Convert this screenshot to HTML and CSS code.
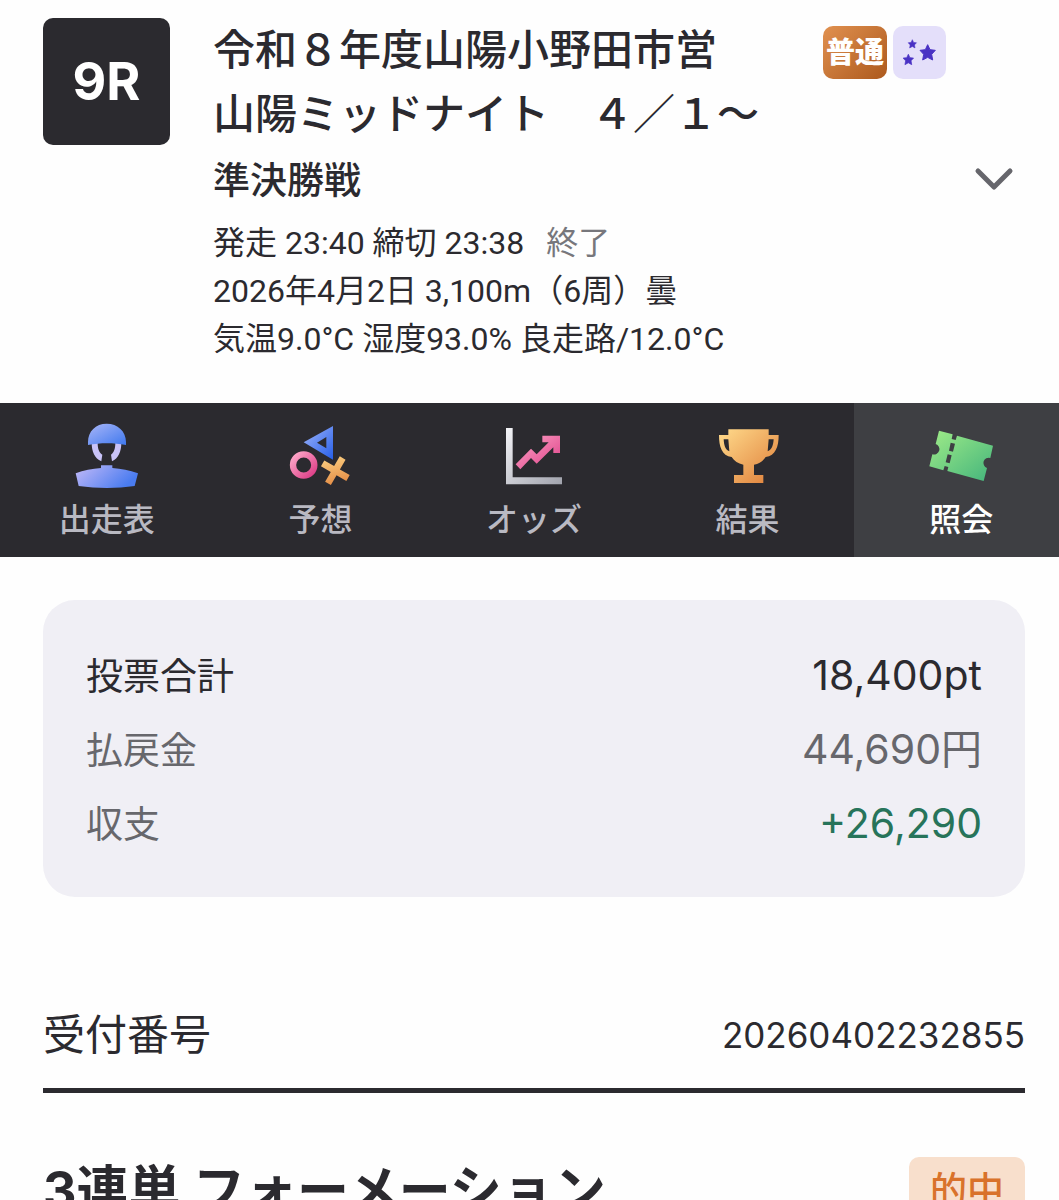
FILE: index.html
```html
<!DOCTYPE html>
<html lang="ja">
<head>
<meta charset="utf-8">
<meta name="viewport" content="width=device-width, initial-scale=1">
<title>9R 準決勝戦 照会</title>
<link rel="stylesheet" href="styles.css">
</head>
<body>
<header class="race">
  <div class="race-number">9R</div>
  <div class="race-body">
    <h1 class="race-title">令和８年度山陽小野田市営<br>山陽ミッドナイト　４／１〜</h1>
    <h2 class="race-name">準決勝戦</h2>
    <div class="race-info">
      <p>発走 23:40 締切 23:38<span class="race-state">終了</span></p>
      <p>2026年4月2日 3,100m（6周）曇</p>
      <p>気温9.0°C 湿度93.0% 良走路/12.0°C</p>
    </div>
  </div>
  <div class="race-side">
    <div class="badges">
      <span class="badge badge-grade">普通</span>
      <span class="badge badge-night">
        <svg class="stars" viewBox="340 78 159 159" role="img" aria-label="ミッドナイト">
          <defs><path id="star" d="M0-24 7-9 23-7 12 5 15 22 0 14-15 22-12 5-23-7-7-9Z" stroke-linejoin="round" stroke-width="3"/></defs>
          <g fill="#4a32c4" stroke="#4a32c4">
            <use href="#star" transform="translate(444 158)"/>
            <use href="#star" transform="translate(398 132) scale(.54)"/>
            <use href="#star" transform="translate(386 179) scale(.68)"/>
          </g>
        </svg>
      </span>
    </div>
    <button class="toggle" type="button" aria-label="詳細を開く">
      <svg viewBox="0 0 40 24" width="40" height="24"><path d="M4 4 20 20 36 4" fill="none" stroke="#66666c" stroke-width="5" stroke-linecap="round" stroke-linejoin="round"/></svg>
    </button>
  </div>
</header>

<nav class="tabs">
  <a class="tab" href="#entries">
    <svg class="tab-icon" viewBox="93 66 216 198" aria-hidden="true">
      <defs>
        <linearGradient id="helmet" x1="0" y1="0" x2="1" y2="1"><stop offset="0" stop-color="#a9b6f8"/><stop offset="1" stop-color="#3f78ee"/></linearGradient>
        <linearGradient id="body" x1="0" y1="0" x2="1" y2=".4"><stop offset="0" stop-color="#c4baf8"/><stop offset="1" stop-color="#4a7cf0"/></linearGradient>
      </defs>
      <path fill="#c9c3f8" d="M155 128h18c0 16 3 28 14 36l-3 20c-20-9-29-29-29-56ZM244 128h-18c0 16-3 28-13 36l3 20c19-9 28-29 28-56Z"/>
      <path fill="url(#helmet)" d="M144 135v-9c0-32 23-55 56-55s58 23 58 55v9c-38-7-76-7-114 0Z"/>
      <path fill="url(#body)" d="M183 196h34v8c27 2 51 6 77 16l-10 38c-54 8-112 8-168 0l-9-38c24-9 49-14 76-16Z"/>
    </svg>
    <span>出走表</span>
  </a>
  <a class="tab" href="#forecast">
    <svg class="tab-icon" viewBox="72 66 216 198" aria-hidden="true">
      <defs>
        <linearGradient id="blue" x1="0" y1="0" x2="1" y2="1"><stop offset="0" stop-color="#a0b6fa"/><stop offset="1" stop-color="#265ee8"/></linearGradient>
        <linearGradient id="pink" x1="0" y1="0" x2="1" y2="1"><stop offset="0" stop-color="#ffa8c9"/><stop offset="1" stop-color="#dc3d86"/></linearGradient>
        <linearGradient id="gold" x1="0" y1="0" x2="1" y2="1"><stop offset="0" stop-color="#ffdb8c"/><stop offset="1" stop-color="#df7d38"/></linearGradient>
      </defs>
      <path fill="url(#blue)" fill-rule="evenodd" d="M219 78v101l-88-52ZM199 111l-28 17 28 17Z"/>
      <circle cx="131" cy="195" r="32" fill="none" stroke="url(#pink)" stroke-width="19"/>
      <path fill="url(#gold)" d="M-10-44H10V-10H44V10H10V44H-10V10H-44V-10H-10Z" transform="translate(226 212) rotate(30)"/>
    </svg>
    <span>予想</span>
  </a>
  <a class="tab" href="#odds">
    <svg class="tab-icon" viewBox="84 66 216 198" aria-hidden="true">
      <defs><linearGradient id="silver" x1="0" y1="0" x2="1" y2="1"><stop offset="0" stop-color="#f4f4f8"/><stop offset="1" stop-color="#a1a3ad"/></linearGradient></defs>
      <path fill="url(#silver)" d="M108 84h20v148h148v21H108Z"/>
      <path fill="url(#pink)" d="M217 107H270V159H250V142L200 191 183 174 151 208 137 193 183 146 200 163 236 127H217Z"/>
    </svg>
    <span>オッズ</span>
  </a>
  <a class="tab" href="#result">
    <svg class="tab-icon" viewBox="63 66 216 198" aria-hidden="true">
      <path fill="url(#gold)" fill-rule="evenodd" d="M112 88h121v17h30c0 35-9 62-39 66-8 12-19 20-35 23v31h28v24H129v-24h28v-31c-16-3-27-11-35-23-30-4-38-31-38-66h28ZM112 118H98c1 17 4 31 17 36ZM233 118l-3 36c13-5 17-19 18-36Z"/>
    </svg>
    <span>結果</span>
  </a>
  <a class="tab tab-active" href="#inquiry" aria-current="page">
    <svg class="tab-icon" viewBox="255 66 216 198" aria-hidden="true">
      <defs><linearGradient id="green" x1="0" y1="0" x2="1" y2="1"><stop offset="0" stop-color="#a0ec88"/><stop offset="1" stop-color="#43b47c"/></linearGradient></defs>
      <path fill="url(#green)" fill-rule="evenodd" d="M297 92 338 103 335 117 347 120 351 107 459 137 451 174A15 15 0 0 0 441 204L431 243 322 213 325 201 314 198 310 211 268 199 277 163A16 16 0 0 0 287 132ZM332 128 345 131 339 155 327 152ZM323 163 335 166 329 190 317 187Z"/>
    </svg>
    <span>照会</span>
  </a>
</nav>

<main class="content">
  <dl class="summary">
    <div class="summary-row summary-total"><dt>投票合計</dt><dd>18,400pt</dd></div>
    <div class="summary-row"><dt>払戻金</dt><dd>44,690円</dd></div>
    <div class="summary-row summary-profit"><dt>収支</dt><dd>+26,290</dd></div>
  </dl>
  <section class="receipt">
    <div class="receipt-head">
      <span class="receipt-label">受付番号</span>
      <span class="receipt-number">20260402232855</span>
    </div>
    <div class="bet-head">
      <h3 class="bet-title">3連単 フォーメーション</h3>
      <span class="hit">的中</span>
    </div>
  </section>
</main>
</body>
</html>
```
FILE: styles.css
```css
* { box-sizing: border-box; margin: 0; padding: 0; }

html, body { height: 100%; overflow: hidden; }

body {
  background: #fefefe;
  color: #2b2a2f;
  font-family: Inter, "Noto Sans CJK JP", sans-serif;
  font-size: 32px;
}

.race {
  display: flex;
  gap: 43px;
  padding: 18px 43px 40px;
}

.race-number {
  display: grid;
  place-items: center;
  flex: none;
  width: 127px;
  height: 127px;
  border-radius: 10px;
  background: #2b2a2f;
  color: #fff;
  font-size: 52px;
  font-weight: 700;
}

.race-body { flex: 1; white-space: nowrap; }
.race-title { font-size: 42px; font-weight: 500; line-height: 64px; }
.race-name { font-size: 37px; font-weight: 500; line-height: 70px; }

.race-info {
  padding-top: 3px;
  font-family: Roboto, "Noto Sans CJK JP", sans-serif;
  line-height: 48px;
}

.race-state { margin-left: 22px; color: #77777c; }

.race-side {
  display: flex;
  flex-direction: column;
  flex: none;
  width: 193px;
  padding-top: 8px;
}

.badges { display: flex; gap: 6px; }

.badge {
  display: grid;
  place-items: center;
  height: 53px;
  border-radius: 10px;
}

.badge-grade {
  width: 64px;
  background: linear-gradient(135deg, #e19150, #ac591d);
  color: #fff;
  font-size: 29px;
  font-weight: 900;
  line-height: 53px;
}

.badge-night { width: 53px; background: #e4dffa; }
.stars { width: 53px; height: 53px; }

.toggle {
  align-self: flex-end;
  margin: 88px 2px 0 0;
  border: 0;
  background: none;
  line-height: 0;
}

/* the bar runs past the right edge */
.tabs {
  display: grid;
  grid-template-columns: repeat(5, 1fr);
  margin-right: -9px;
  background: #2b2a2f;
}

.tab {
  display: flex;
  flex-direction: column;
  align-items: center;
  gap: 8px;
  padding: 19px 0 13px;
  color: #b9b9c2;
  font-weight: 500;
  line-height: 48px;
  text-decoration: none;
}

.tab-active { background: #3e3f43; color: #fff; }
.tab-icon { width: 72px; height: 66px; }

.content { padding: 43px 34px 43px 43px; }

.summary {
  padding: 38px 43px 37px;
  border-radius: 32px;
  background: #f0eff5;
  color: #67676c;
}

.summary-row {
  display: flex;
  justify-content: space-between;
  align-items: baseline;
  height: 74px;
  line-height: 74px;
}

.summary-row dt { font-size: 37px; }
.summary-row dd { font-size: 41px; }
.summary-total { color: #2b2a2f; }
.summary-profit dd { color: #27745a; }

.receipt-head {
  display: flex;
  justify-content: space-between;
  align-items: center;
  margin-top: 106px;
  padding-bottom: 21px;
  border-bottom: 5px solid #2b2a2f;
  line-height: 64px;
}

.receipt-label { font-size: 42px; }
.receipt-number { font-size: 35px; }

.bet-head {
  display: flex;
  justify-content: space-between;
  padding-top: 64px;
}

.bet-title { font-size: 52px; font-weight: 700; line-height: 68px; }

.hit {
  padding: 0 21px;
  border-radius: 10px;
  background: #f8dfcc;
  color: #d9722b;
  font-size: 37px;
  font-weight: 500;
  line-height: 68px;
}
```
